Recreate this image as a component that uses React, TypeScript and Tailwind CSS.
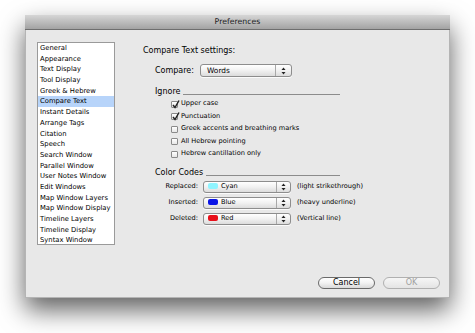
import React, { FC } from 'react';

const listItems = [
  'General',
  'Appearance',
  'Text Display',
  'Tool Display',
  'Greek & Hebrew',
  'Compare Text',
  'Instant Details',
  'Arrange Tags',
  'Citation',
  'Speech',
  'Search Window',
  'Parallel Window',
  'User Notes Window',
  'Edit Windows',
  'Map Window Layers',
  'Map Window Display',
  'Timeline Layers',
  'Timeline Display',
  'Syntax Window',
];

const ignoreItems = [
  { label: 'Upper case', checked: true },
  { label: 'Punctuation', checked: true },
  { label: 'Greek accents and breathing marks', checked: false },
  { label: 'All Hebrew pointing', checked: false },
  { label: 'Hebrew cantillation only', checked: false },
];

const colorRows = [
  { label: 'Replaced:', name: 'Cyan', swatch: 'bg-[#8ff4ff]', note: '(light strikethrough)' },
  { label: 'Inserted:', name: 'Blue', swatch: 'bg-[#0a14e6]', note: '(heavy underline)' },
  { label: 'Deleted:', name: 'Red', swatch: 'bg-[#e8101a]', note: '(Vertical line)' },
];

const Arrows: FC = () => (
  <svg width="5" height="8" viewBox="0 0 5 8">
    <path d="M2.5 0.5 L4.5 3 L0.5 3 Z" fill="#222" />
    <path d="M2.5 7.5 L4.5 5 L0.5 5 Z" fill="#222" />
  </svg>
);

// popup button with the stepper part on the right
const Popup: FC<{ className: string; stepper: string; children: React.ReactNode }> = ({ className, stepper, children }) => (
  <div
    className={`flex items-center rounded-[3px] border border-[#8d8d8d] bg-linear-to-b from-[#ffffff] via-[#f1f1f1] to-[#dcdcdc] shadow-[0_1px_0_rgba(255,255,255,0.8)] ${className}`}
  >
    <div className="flex flex-1 items-center gap-[3px] overflow-hidden">{children}</div>
    <div className={`flex h-full items-center justify-center border-l border-[#a8a8a8] ${stepper}`}>
      <Arrows />
    </div>
  </div>
);

const Checkbox: FC<{ checked: boolean }> = ({ checked }) => (
  <div className="relative h-[7px] w-[7px] rounded-[1px] border border-[#8a8a8a] bg-linear-to-b from-[#ffffff] to-[#e6e6e6]">
    {checked && (
      <svg className="absolute -top-[2px] left-0" width="8" height="9" viewBox="0 0 8 9">
        <path d="M1 5 L3 7.5 L7 0.5" fill="none" stroke="#222" strokeWidth="1.5" />
      </svg>
    )}
  </div>
);

const GroupHeader: FC<{ title: string }> = ({ title }) => (
  <div className="ml-[12px] flex h-[10px] w-[185px] items-end gap-[3px] leading-[10px]">
    <span className="text-[8px] text-black">{title}</span>
    <div className="mb-[2px] h-px flex-1 bg-[#8c8c8c]" />
  </div>
);

export default function App(): JSX.Element {
  return (
    <div className="h-[333px] w-[475px] overflow-hidden bg-white pl-[25px] pt-[15px] font-['DejaVu_Sans',sans-serif] text-black">
      <div className="flex h-[283px] w-[425px] flex-col bg-[#e8e8e8] shadow-[0_12px_24px_rgba(0,0,0,0.62)]">
        <div className="flex h-[15px] items-center justify-center border-b border-[#6e6e6e] bg-linear-to-b from-[#d6d6d6] to-[#a3a3a3] text-[7.8px] text-[#222]">
          Preferences
        </div>
        <div className="flex flex-1 border-x border-b border-[#b4b4b4]">
          <div className="ml-[11px] mt-[12px] h-[203px] w-[78px] border border-[#9a9a9a] bg-white">
            {listItems.map((item) => (
              <div
                key={item}
                className={`h-[10.7px] pl-[2px] text-[6.8px] leading-[10px] ${item === 'Compare Text' ? 'bg-[#b7d4fa]' : ''}`}
              >
                {item}
              </div>
            ))}
          </div>
          <div className="ml-[28px] mr-[9px] flex flex-1 flex-col">
            <div className="mt-[16px] h-[10px] text-[8px] leading-[10px]">Compare Text settings:</div>
            <div className="ml-[12px] mt-[8px] flex h-[13px] items-center">
              <span className="w-[45px] text-[8px]">Compare:</span>
              <Popup className="h-[13px] w-[92px]" stepper="w-[16px]">
                <span className="pl-[6px] text-[7.4px]">Words</span>
              </Popup>
            </div>
            <div className="mt-[10px]">
              <GroupHeader title="Ignore" />
            </div>
            <div className="ml-[28px] mt-[1px] flex flex-col">
              {ignoreItems.map((item) => (
                <div key={item.label} className="flex h-[12.5px] items-center gap-[3px]">
                  <Checkbox checked={item.checked} />
                  <span className="text-[6.6px]">{item.label}</span>
                </div>
              ))}
            </div>
            <div className="mt-[7px]">
              <GroupHeader title="Color Codes" />
            </div>
            <div className="mt-[2.5px] flex flex-col gap-[3px]">
              {colorRows.map((row) => (
                <div key={row.label} className="flex h-[13px] items-center">
                  <span className="w-[55px] text-right text-[6.6px]">{row.label}</span>
                  <Popup className="ml-[5px] h-[12px] w-[88px]" stepper="w-[14px]">
                    <div className={`ml-[4px] h-[6px] w-[10px] rounded-[2px] ${row.swatch}`} />
                    <span className="text-[6.6px]">{row.name}</span>
                  </Popup>
                  <span className="ml-[6px] text-[6.6px]">{row.note}</span>
                </div>
              ))}
            </div>
            <div className="mb-[8px] mt-auto flex justify-end gap-[8px]">
              <div className="flex h-[12px] w-[57px] items-center justify-center rounded-full border border-[#6a6a6a] bg-linear-to-b from-[#ffffff] via-[#f2f2f2] to-[#d9d9d9] text-[8px]">
                Cancel
              </div>
              <div className="flex h-[12px] w-[57px] items-center justify-center rounded-full border border-[#b0b0b0] bg-linear-to-b from-[#f6f6f6] to-[#e4e4e4] text-[8px] text-[#a0a0a0]">
                OK
              </div>
            </div>
          </div>
        </div>
      </div>
    </div>
  );
}
